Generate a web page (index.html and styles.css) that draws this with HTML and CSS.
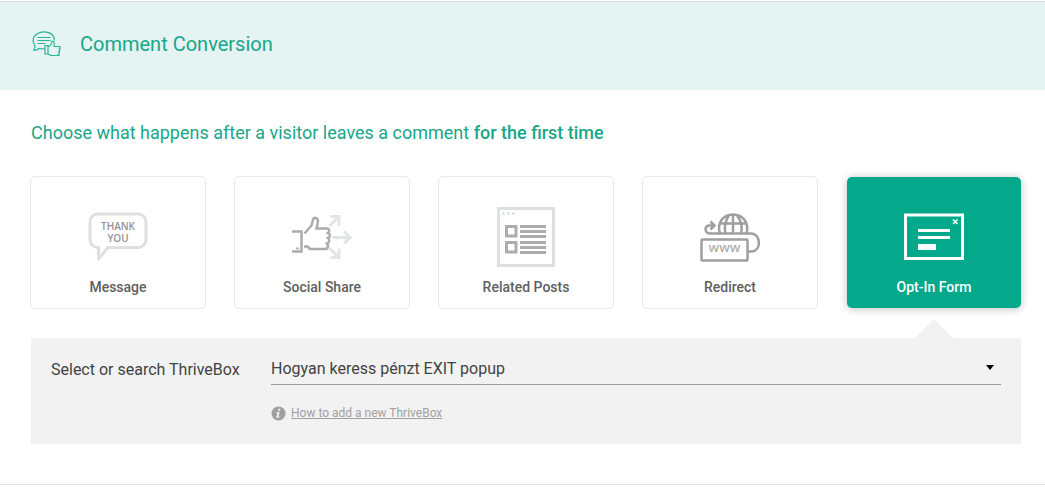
FILE: index.html
```html
<!DOCTYPE html>
<html lang="en">
<head>
<meta charset="utf-8">
<title>Comment Conversion</title>
<link rel="stylesheet" href="styles.css">
</head>
<body>
<main class="page">
  <header class="banner">
    <svg class="banner-icon" viewBox="0 0 30 28" aria-hidden="true">
      <path d="M1.500 20.500C2.800 18.500 3 17 3 15.500C0.500 12 0.500 8 3.500 5C8 0.800 16 0.800 20 4.500C22 6.500 22.700 8.500 22.300 10.500M1.500 20.500C4.500 20.200 6 19.500 7 18.500C9 19 11 19 13 18.500M5.500 7.500H18.500M5.500 10.500H18.500M5.500 13.500H13.500"/>
      <path d="M13 15.500H16V24H13ZM16 17C18.500 16 19.500 14 19.700 11.800C20.500 10.800 22 11.300 22.300 12.800L22 16.500H28V19H26.500M28 19L27.500 21.500H26M27.500 21.500L27 24H25.500M27 24V25.500H20C18.500 25.500 17.500 24.500 16 24"/>
    </svg>
    <h1 class="banner-title">Comment Conversion</h1>
  </header>
  <section class="content">
    <h2 class="heading">Choose what happens after a visitor leaves a comment <strong>for the first time</strong></h2>
    <div class="options">
      <button class="card" type="button">
        <svg class="card-icon" viewBox="0 0 64 60" aria-hidden="true">
          <path class="light" stroke-linejoin="round" d="M12.500 40.500H11.500A8 8 0 0 1 4 32.500V15A8 8 0 0 1 11.500 7H52.500A8 8 0 0 1 60 15V32.500A8 8 0 0 1 52.500 40.500H22L12.500 52Z"/>
          <text class="thanks" x="32" y="23">THANK</text>
          <text class="thanks" x="32" y="35">YOU</text>
        </svg>
        <span>Message</span>
      </button>
      <button class="card" type="button">
        <svg class="card-icon" viewBox="0 0 64 60" aria-hidden="true">
          <g class="pale"><path d="M42.500 30.500H59M54 24.500L60 30.500L54 36.500M39.500 19L48.500 10M40.500 9.500H49V18.500M39.500 41L48.500 50M40.500 50.500H49V41.500"/></g>
          <path class="mid thin" d="M2 24.500H11.500V44.500H2M7.500 40.500V42.500M14.500 26.500L21.500 18.500L23 12.500C23.500 10 27.500 10.500 28 13.500L27.500 17L26.500 21.500H37C39.500 21.500 40 24.500 38 26C40.500 27 40.500 30 38 31C40 32.500 39.500 35.500 37 36.500C39 38.500 38 42 35 42H20L17.500 39.500H14"/>
        </svg>
        <span>Social Share</span>
      </button>
      <button class="card" type="button">
        <svg class="card-icon" viewBox="0 0 64 60" aria-hidden="true">
          <rect class="light" x="4.500" y="1.500" width="55" height="57"/>
          <path class="light thin" d="M8 6.500H10.500M13 6.500H15.500M18 6.500H20.500"/>
          <path class="mid" d="M12.500 19.500H22V29H12.500ZM12.500 35.500H22V45H12.500ZM26 19.500H52M26 24.500H52M26 29.500H52M26 35.500H52M26 40.500H52M26 45.500H52"/>
        </svg>
        <span>Related Posts</span>
      </button>
      <button class="card" type="button">
        <svg class="card-icon" viewBox="0 0 64 60" aria-hidden="true">
          <path class="dark" d="M22 26.500C18.500 16 25 7.500 35 7.500C45 7.500 51.500 16 48.500 26.500M35 7.500V26.500M31 8.500C27 14 26 20 27.500 26.500M39 8.500C43.500 14 44.500 20 43 26.500M23 16.500H48M11.500 26.500C6 25.500 6.500 18.500 11.500 18.500H16M12.500 14.500L16.500 18.500L12.500 22.500M11 26.500H53.500C63 27.500 63.500 43.500 54 44.500H50"/>
          <rect class="dark" x="3.500" y="32.500" width="46" height="21" rx="1"/>
          <text class="www" x="26.500" y="45">www</text>
        </svg>
        <span>Redirect</span>
      </button>
      <button class="card card-active" type="button" aria-pressed="true">
        <svg class="card-icon" viewBox="0 0 64 60" aria-hidden="true">
          <path class="white" d="M3.500 8H60.500V51.500H3.500ZM16 23.500H48M16 30.500H48"/>
          <path class="white-fill" d="M16 37H34V43H16Z"/>
          <path class="white fine" d="M51 12.500L55.500 17M55.500 12.500L51 17"/>
        </svg>
        <span>Opt-In Form</span>
      </button>
    </div>
    <div class="panel">
      <label class="panel-label" for="thrivebox">Select or search ThriveBox</label>
      <div class="field">
        <div class="select-wrap">
          <select class="select" id="thrivebox">
            <option>Hogyan keress pénzt EXIT popup</option>
          </select>
        </div>
        <div class="help">
          <svg class="help-icon" viewBox="0 0 16 16" aria-hidden="true">
            <circle cx="8" cy="8" r="7.500"/>
            <path d="M8 3H10L9.500 5H7.500ZM6 6.300H9.300L8 11H9L8.500 12.500H5.500L7 7.600H5.700Z"/>
          </svg>
          <a class="help-link" href="#">How to add a new ThriveBox</a>
        </div>
      </div>
    </div>
  </section>
</main>
</body>
</html>
```
FILE: styles.css
```css
* { box-sizing: border-box; }
body {
  margin: 0;
  background: #fff;
  font-family: Roboto, "Liberation Sans", sans-serif;
}
.page {
  padding-top: 1px;
  border-bottom: 1px solid #e5e5e5;
}
.banner {
  display: flex;
  align-items: center;
  gap: 18px;
  padding: 28px 32px 32px;
  border-top: 1px solid #d5dedd;
  background: #e5f3f2;
}
.banner-icon {
  width: 30px;
  height: 28px;
  fill: none;
  stroke: #2bb596;
  stroke-width: 1.200;
}
.banner-title {
  margin: 0;
  color: #18a689;
  font-size: 20px;
  font-weight: 400;
  line-height: 28px;
}
.content { padding: 31px 24px 40px 30px; }
.heading {
  margin: 0 0 31px 1px;
  color: #18a689;
  font-size: 18px;
  font-weight: 400;
  line-height: 24px;
}
.heading strong { font-weight: 500; }
.options {
  display: grid;
  grid-template-columns: repeat(5, 1fr);
  gap: 28px;
  margin-right: -1px;
}
.card {
  display: flex;
  flex-direction: column;
  align-items: center;
  gap: 10px;
  padding: 30px 0 10px;
  border: 1px solid #e8e8e8;
  border-radius: 5px;
  background: #fff;
  color: #5f6061;
  font-family: inherit;
  font-size: 14px;
  font-weight: 500;
  line-height: 21px;
}
.card-active {
  margin: 1px;
  border: 0;
  background: #04a88b;
  color: #fff;
  box-shadow: 0 1px 8px rgba(0, 0, 0, 0.250);
}
.card-icon {
  width: 64px;
  height: 60px;
  fill: none;
  stroke-width: 3;
}
.light { stroke: #dedfdf; }
.pale { stroke: #e3e4e4; }
.mid { stroke: #acacac; }
.dark { stroke: #9f9f9f; stroke-width: 2.500; }
.white { stroke: #fff; }
.white-fill { fill: #fff; }
.thin { stroke-width: 2.500; }
.fine { stroke-width: 1.500; }
.thanks, .www {
  font-family: "Open Sans", sans-serif;
  font-weight: 600;
  text-anchor: middle;
}
.thanks { fill: #939393; font-size: 10px; }
.www { fill: #b0b0b0; font-size: 13px; }
.panel {
  position: relative;
  display: flex;
  margin: 29px 0 0 1px;
  padding: 14px 20px 23px;
  background: #f2f2f2;
}
.panel::before {
  content: "";
  position: absolute;
  right: 68px;
  bottom: 100%;
  border: 19px solid transparent;
  border-top: 0;
  border-bottom-color: #f2f2f2;
}
.panel-label {
  flex: 0 0 220px;
  color: #434343;
  font-size: 16px;
  line-height: 36px;
}
.field { flex: 1; }
.select-wrap { position: relative; }
.select-wrap::after {
  content: "";
  position: absolute;
  top: 13px;
  right: 7px;
  border: 4px solid transparent;
  border-top: 5px solid #000;
  border-bottom: 0;
  pointer-events: none;
}
.select {
  display: block;
  width: 100%;
  height: 33px;
  padding: 0 20px 0 0;
  border: 0;
  border-bottom: 1px solid #9e9e9e;
  border-radius: 0;
  background: transparent;
  color: #434343;
  font-family: inherit;
  font-size: 16px;
  appearance: none;
}
.help {
  display: flex;
  align-items: center;
  gap: 5px;
  margin-top: 20px;
}
.help-icon { width: 15px; height: 15px; fill: #a0a0a0; }
.help-icon path { fill: #f2f2f2; }
.help-link {
  color: #a0a0a0;
  font-size: 12px;
  line-height: 16px;
}
```
